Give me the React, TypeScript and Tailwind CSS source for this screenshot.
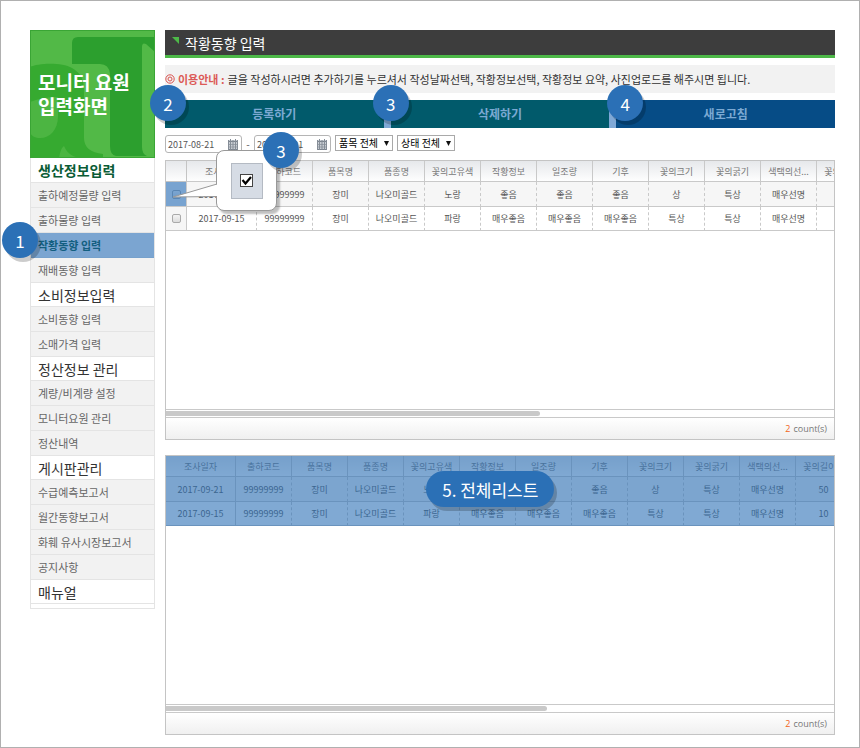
import React from "react";

const columns = [
  "조사일자",
  "출하코드",
  "품목명",
  "품종명",
  "꽃의고유색",
  "작황정보",
  "일조량",
  "기후",
  "꽃의크기",
  "꽃의굵기",
  "색택의선...",
  "꽃의길이...",
];

const rows = [
  ["2017-09-21", "99999999", "장미", "나오미골드", "노랑", "좋음", "좋음", "좋음", "상", "특상", "매우선명", "50"],
  ["2017-09-15", "99999999", "장미", "나오미골드", "파랑", "매우좋음", "매우좋음", "매우좋음", "특상", "특상", "매우선명", "10"],
];

const menu = [
  { title: "생산정보입력", open: true, items: ["출하예정물량 입력", "출하물량 입력", "작황동향 입력", "재배동향 입력"] },
  { title: "소비정보입력", items: ["소비동향 입력", "소매가격 입력"] },
  { title: "정산정보 관리", items: ["계량/비계량 설정", "모니터요원 관리", "정산내역"] },
  { title: "게시판관리", items: ["수급예측보고서", "월간동향보고서", "화훼 유사시장보고서", "공지사항"] },
  { title: "매뉴얼", items: [] },
];

const activeItem = "작황동향 입력";

function Badge({ label, className }: { label: string; className: string }) {
  return (
    <span
      className={`absolute z-20 flex size-9 items-center justify-center rounded-full bg-[#2b70b6] text-[17px] leading-none font-normal text-white shadow-[3px_4px_0_rgba(0,0,0,0.2)] ${className}`}
    >
      {label}
    </span>
  );
}

function Banner() {
  return (
    <div className="relative flex h-32 flex-col justify-center overflow-hidden bg-[#52b947] pl-2">
      <svg viewBox="0 0 125 128" preserveAspectRatio="none" className="absolute inset-0 size-full" aria-hidden="true">
        <path d="M0 37 C8 33 32 32 42 38 C51 43 54 50 54 60 V108 Q54 122 73 124 V128 H0 Z" fill="#36aa30" />
        <path d="M0 72 C10 68 20 67 28 67 V86 C28 100 20 108 10 108 C5 108 2 106 0 103 Z" fill="#4cb542" />
        <path d="M29 128 C30 123 31 118 34 116 C37 122 40 126 50 128 Z" fill="#4cb542" />
        <path d="M48 7 H125 V22 L116 14 Q112 12 112 17 V117 Q112 124 117 126 H86 Q80 125 80 116 V44 Q79 34 70 34 H42 V13 Q42 7 48 7 Z" fill="#2c9f2e" />
        <rect x="0.5" y="0.5" width="124" height="127" fill="none" stroke="#3aa535" />
      </svg>
      <h1 className="relative text-[19px] leading-6 font-bold text-white">
        모니터 요원
        <br />
        입력화면
      </h1>
    </div>
  );
}

function Sidebar() {
  return (
    <aside className="relative w-[125px] shrink-0 self-start">
      <Banner />
      <nav className="border-x border-b border-[#e4e4e4] pb-1">
        {menu.map((group) => (
          <section key={group.title}>
            <h2
              className={`flex items-center border-b border-[#e4e4e4] bg-white pl-[7px] text-sm leading-none ${
                group.open ? "h-[25px] font-bold text-[#0a5c36]" : "h-6 text-[#333]"
              }`}
            >
              {group.title}
            </h2>
            <ul>
              {group.items.map((item) => (
                <li key={item}>
                  <a
                    href="#"
                    className={`flex h-[25px] items-center border-b pl-[7px] text-[11px] leading-none ${
                      item === activeItem
                        ? "border-[#76a1cc] bg-[#7ba5d1] font-bold text-[#135f80]"
                        : "border-[#e4e4e4] bg-[#f2f2f2] text-[#666]"
                    }`}
                  >
                    {item}
                  </a>
                </li>
              ))}
            </ul>
          </section>
        ))}
      </nav>
      <Badge label="1" className="-left-7 top-48" />
    </aside>
  );
}

function CalendarIcon() {
  return (
    <svg width="10" height="11" viewBox="0 0 10 11" aria-hidden="true" className="shrink-0">
      <path d="M0 1 H10 V11 H0 Z" fill="#c9ced4" />
      <path d="M0 2.5 H10 M0 10.5 H10" stroke="#7b838d" />
      <path d="M0 5.5 H10 M0 8 H10" stroke="#9aa1a9" />
      <path d="M0.5 1 V11 M2.5 0 V11 M5 1 V11 M7.5 0 V11 M9.5 1 V11" stroke="#858d97" />
    </svg>
  );
}

function DateField({ label, value }: { label: string; value: string }) {
  return (
    <label className="flex h-[18px] w-[77px] items-center rounded-[3px] border border-[#b5b5b5] bg-white pr-[3px] pl-0.5">
      <input aria-label={label} defaultValue={value} className="w-0 min-w-0 flex-1 bg-transparent text-[9px] leading-none text-[#555] outline-none" />
      <CalendarIcon />
    </label>
  );
}

function Filter({ label, option }: { label: string; option: string }) {
  return (
    <label className="relative flex h-4 w-[58px] items-center">
      <select aria-label={label} className="h-4 w-full appearance-none border border-[#a9a9a9] bg-white pl-[3px] text-[10px] leading-none text-black">
        <option>{option}</option>
      </select>
      <svg width="5" height="5" viewBox="0 0 5 5" className="pointer-events-none absolute right-1" aria-hidden="true">
        <path d="M0 0 H5 L2.5 5 Z" fill="#111" />
      </svg>
    </label>
  );
}

function Grid({ selectable, highlighted }: { selectable?: boolean; highlighted?: boolean }) {
  return (
    <div className="border border-[#c4c4c4] bg-white">
      <div className="h-[248px] overflow-hidden">
        <div className="relative">
          <table className="w-0 table-fixed border-separate border-spacing-0 text-center text-[9px] leading-none whitespace-nowrap text-[#555]">
            <colgroup>
              {selectable && <col className="w-[21px]" />}
              {columns.map((name, i) => (
                <col key={name} className={i === 0 ? "w-[70px]" : "w-14"} />
              ))}
            </colgroup>
            <thead>
              <tr className="h-[21px] bg-linear-to-b from-[#e6e8eb] to-white text-[#777]">
                {selectable && (
                  <th className="border-r border-b border-[#c4c4c4] p-0" aria-label="선택" />
                )}
                {columns.map((name) => (
                  <th key={name} className="border-r border-b border-[#c9c9c9] p-0 font-normal">
                    {name}
                  </th>
                ))}
              </tr>
            </thead>
            <tbody>
              {rows.map((row, r) => (
                <tr key={row[0]} className={r === 0 ? "h-[25px] bg-[#f6f6f6]" : "h-6 bg-white"}>
                  {selectable && (
                    <td className={`border-r border-b border-[#c9c9c9] p-0 ${r === 0 ? "bg-[#78a3d0]" : "bg-[#f6f6f6]"}`}>
                      <input
                        type="checkbox"
                        aria-label={`${row[0]} 선택`}
                        className={`mx-auto block size-[9px] appearance-none rounded-[2px] border bg-linear-to-b ${
                          r === 0 ? "border-[#5a86b4] from-[#7ba5d1] to-[#6f9bc8]" : "border-[#aaa] from-[#f4f4f4] to-[#ddd]"
                        }`}
                      />
                    </td>
                  )}
                  {row.map((cell, c) => (
                    <td
                      key={c}
                      className={`border-r border-b border-[#c9c9c9] p-0 ${c === 0 && !selectable ? "" : "[border-right-style:dashed]"}`}
                    >
                      {cell}
                    </td>
                  ))}
                </tr>
              ))}
            </tbody>
          </table>
          {highlighted && <div className="absolute inset-0 bg-[#2b70b6]/60" />}
        </div>
      </div>
      <div className="h-[9px] border-y border-[#c9c9c9] bg-white py-px">
        <div className={`h-full rounded-r-sm bg-[#c9c9c9] ${selectable ? "w-[56%]" : "w-[57%]"}`} />
      </div>
      <div className="flex h-[21px] items-center justify-end bg-linear-to-b from-white to-[#f0f0f0] pr-[7px] font-['Open_Sans','Noto_Sans_CJK_KR',sans-serif] text-[9px] leading-none text-[#777]">
        <span className="mr-[3px] text-[#f26522]">2</span>count(s)
      </div>
    </div>
  );
}

function CheckCallout() {
  return (
    <div className="absolute top-[120px] left-[51px] z-10 h-[61px] w-[61px]">
      <div className="flex size-full items-center justify-center rounded-lg border border-[#999] bg-white shadow-[3px_3px_2px_rgba(0,0,0,0.25)]">
        <div className="flex h-9 w-8 items-center justify-center border border-[#b4bac3] bg-[#d6dce5]">
          <label className="relative block size-[13px]">
            <input type="checkbox" defaultChecked aria-label="행 선택" className="block size-[13px] appearance-none border border-[#444] bg-white" />
            <svg viewBox="0 0 13 13" className="pointer-events-none absolute inset-0 size-full" aria-hidden="true">
              <path d="M2.5 6 L5.5 9.5 L11 3" fill="none" stroke="#000" strokeWidth="2.2" />
            </svg>
          </label>
        </div>
      </div>
      <svg width="46" height="16" viewBox="0 0 46 16" className="absolute top-[33px] -left-11" aria-hidden="true">
        <path d="M46 1 L1 14 L46 13 Z" fill="#fff" />
        <path d="M45 1 L1 14 L45 13.5" fill="none" stroke="#999" />
      </svg>
    </div>
  );
}

export default function App() {
  return (
    <div className="min-h-screen border border-[#b0b0b0] bg-white pt-[29px] pr-6 pb-3 pl-[29px] font-['Noto_Sans_CJK_KR','Noto_Sans',sans-serif]">
      <div className="flex gap-[10px]">
        <Sidebar />
        <main className="relative min-w-0 flex-1">
          <header className="flex h-7 items-center gap-1.5 border-b-[3px] border-[#4db848] bg-[#3d3d3d] pl-[7px]">
            <svg width="7" height="7" viewBox="0 0 7 7" aria-hidden="true" className="mb-1">
              <path d="M0 0 H7 V7 Z" fill="#4db848" />
            </svg>
            <h2 className="text-sm leading-none text-white">작황동향 입력</h2>
          </header>

          <p className="mt-[7px] flex h-7 items-center gap-[3px] bg-[#f2f2f2] text-[11px] leading-none whitespace-nowrap text-[#333]">
            <svg width="10" height="10" viewBox="0 0 10 10" aria-hidden="true">
              <circle cx="5" cy="5" r="4.2" fill="none" stroke="#d9534f" />
              <circle cx="5" cy="5" r="2" fill="none" stroke="#d9534f" />
            </svg>
            <strong className="text-[#dc5a57]">이용안내 :</strong>
            <span>글을 작성하시려면 추가하기를 누르셔서 작성날짜선택, 작황정보선택, 작황정보 요약, 사진업로드를 해주시면 됩니다.</span>
          </p>

          <div className="relative mt-[7px] flex h-7 gap-[7px] bg-[#7fa8d6] text-xs font-bold text-[#7ba9d3]">
            <button type="button" className="flex-1 bg-[#015a6b]">등록하기</button>
            <button type="button" className="flex-1 bg-[#015a6b]">삭제하기</button>
            <button type="button" className="flex-1 bg-[#064c86]">새로고침</button>
            <Badge label="2" className="-left-[15px] -top-[15px]" />
            <Badge label="3" className="left-[31%] -top-[15px]" />
            <Badge label="4" className="left-[66%] -top-[15px]" />
          </div>

          <div className="mt-[7px] flex h-[18px] gap-1">
            <div className="flex items-center">
              <DateField label="시작일" value="2017-08-21" />
              <span className="w-3 text-center text-[10px] leading-none text-[#555]">-</span>
              <DateField label="종료일" value="2017-09-21" />
            </div>
            <Filter label="품목" option="품목 전체" />
            <Filter label="상태" option="상태 전체" />
          </div>

          <div className="mt-[7px]">
            <Grid selectable />
          </div>

          <div className="relative mt-[15px]">
            <Grid highlighted />
            <div className="absolute top-4 left-[39%] flex h-9 w-32 items-center justify-center rounded-full bg-[#2b70b6] text-[17px] leading-none text-white shadow-[3px_4px_0_rgba(0,0,0,0.2)]">
              5. 전체리스트
            </div>
          </div>

          <CheckCallout />
          <Badge label="3" className="left-[98px] top-[102px]" />
        </main>
      </div>
    </div>
  );
}
